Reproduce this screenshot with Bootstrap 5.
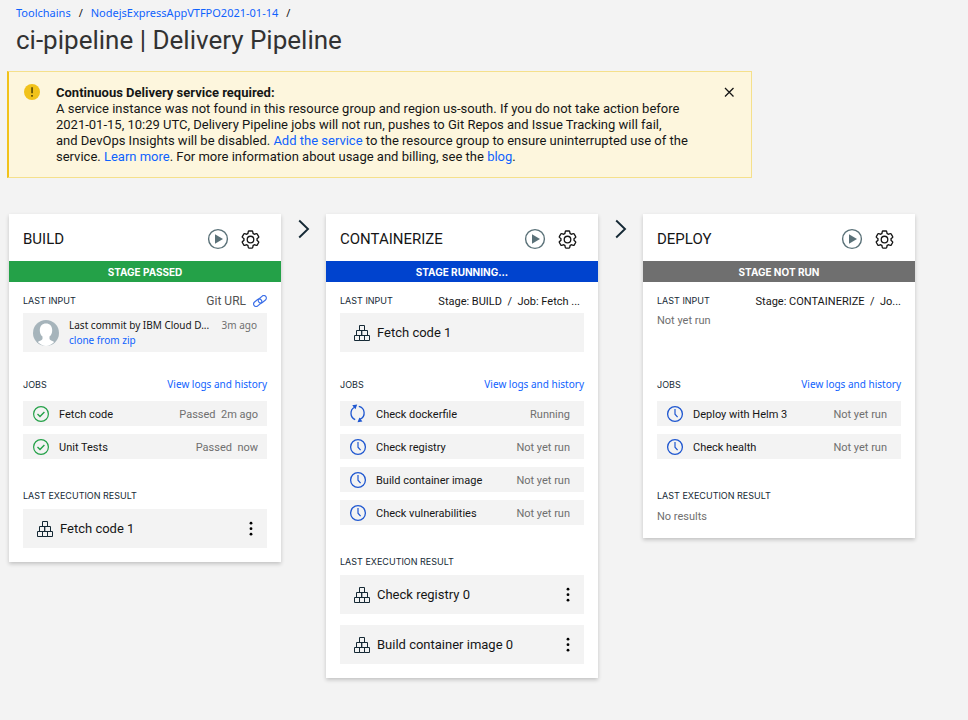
<!DOCTYPE html>
<html lang="en">
<head>
<meta charset="utf-8">
<meta name="viewport" content="width=device-width, initial-scale=1">
<title>ci-pipeline | Delivery Pipeline</title>
<link href="https://cdn.jsdelivr.net/npm/bootstrap@5.3.0/dist/css/bootstrap.min.css" rel="stylesheet">
<style>
  body { background: #f3f3f3; color: #161616; font-family: Roboto, "Liberation Sans", sans-serif; font-size: 13px; line-height: 16px; }
  a { color: #0f62fe; text-decoration: none; }
  a:hover { text-decoration: underline; }
  svg { display: block; flex: none; }
  .page-head { padding: 6px 16px 0; }
  .crumbs { font-size: 11px; line-height: 14px; font-family: "Noto Sans", sans-serif; }
  .page-title { font-size: 26px; line-height: 32px; font-weight: 400; color: #323232; }
  .page-main { padding: 15px 7px 0; }
  .notice { max-width: 745px; background: #fdf6dd; border: 1px solid #f5e08b; border-left: 2px solid #f1c21b; padding: 12px 14px 12px 15px; gap: 16px; }
  .notice-text { max-width: 640px; padding-top: 1px; }
  .icon-btn { background: none; border: 0; padding: 0; color: #161616; }
  .pipeline { padding: 36px 2px 24px; }
  .stage { flex: 0 1 272px; min-width: 0; background: #fff; box-shadow: 0 2px 4px rgba(0,0,0,.2); padding-bottom: 14px; }
  .stage-arrow { flex: 0 0 45px; padding: 5px 0 0 1px; color: #152935; }
  .stage-head { height: 47px; padding: 3px 20px 0 14px; }
  .stage-name { font-size: 15px; line-height: 18px; font-weight: 400; }
  .stage-state { height: 21px; color: #fff; font-size: 10px; font-weight: 700; font-family: Inter, sans-serif; }
  .state-passed { background: #24a148; }
  .state-running { background: #0043ce; }
  .state-idle { background: #6f6f6f; }
  .stage-body { padding: 7px 14px 0; }
  .section-label { font-size: 9px; line-height: 12px; font-weight: 400; font-family: Inter, sans-serif; color: #152935; }
  .input-head { height: 24px; }
  .input-area { height: 39px; }
  .git-url { font-size: 12px; gap: 7px; color: #525252; }
  .jobs-head { height: 33px; margin-top: 16px; }
  .result-head { height: 26px; margin-top: 24px; }
  .note { font-size: 11px; line-height: 15px; }
  .wide-note { font-size: 10px; line-height: 15px; font-family: "Noto Sans", sans-serif; }
  .soft { color: #6f6f6f; }
  .job { height: 25px; background: #f3f3f3; padding: 1px 9px 0; gap: 9px; }
  .job-later { padding-right: 14px; }
  .tile { height: 39px; background: #f3f3f3; padding: 1px 14px 0; gap: 7px; }
  .commit { height: 39px; background: #f3f3f3; padding: 0 10px; gap: 10px; }
  .stack-8 { gap: 8px; }
  .stack-11 { gap: 11px; }
  .head-icons { gap: 11px; }
</style>
</head>
<body>
<svg class="d-none" aria-hidden="true">
  <symbol id="i-play" viewBox="0 0 22 22"><circle cx="11" cy="11" r="9.4" fill="none" stroke="#5a7178" stroke-width="1.4"/><path d="M8 6.3v9.4l8-4.7z" fill="#5a7178"/></symbol>
  <symbol id="i-gear" viewBox="0 0 32 32"><path fill="currentColor" d="M27 16.76v-1.53l1.92-1.68A2 2 0 0 0 29.3 11l-2.36-4a2 2 0 0 0-1.73-1 2 2 0 0 0-.64.1l-2.43.82a11.35 11.35 0 0 0-1.31-.75l-.51-2.52a2 2 0 0 0-2-1.61h-4.68a2 2 0 0 0-2 1.61l-.51 2.52a11.48 11.48 0 0 0-1.32.75L7.43 6.06A2 2 0 0 0 6.79 6a2 2 0 0 0-1.73 1L2.7 11a2 2 0 0 0 .41 2.51L5 15.24v1.53l-1.89 1.68A2 2 0 0 0 2.7 21l2.36 4a2 2 0 0 0 1.73 1 2 2 0 0 0 .64-.1l2.43-.82a11.35 11.35 0 0 0 1.31.75l.51 2.52a2 2 0 0 0 2 1.61h4.72a2 2 0 0 0 2-1.61l.51-2.52a11.48 11.48 0 0 0 1.32-.75l2.42.82a2 2 0 0 0 .64.1 2 2 0 0 0 1.73-1l2.28-4a2 2 0 0 0-.41-2.51zM25.21 24l-3.43-1.16a8.86 8.86 0 0 1-2.71 1.57L18.36 28h-4.72l-.71-3.55a9.36 9.36 0 0 1-2.7-1.57L6.79 24l-2.36-4 2.72-2.4a8.9 8.9 0 0 1 0-3.13L4.43 12l2.36-4 3.43 1.16a8.86 8.86 0 0 1 2.71-1.57L13.64 4h4.72l.71 3.55a9.36 9.36 0 0 1 2.7 1.57L25.21 8l2.36 4-2.72 2.4a8.9 8.9 0 0 1 0 3.13L27.57 20z"/><circle cx="16" cy="16" r="5" fill="none" stroke="currentColor" stroke-width="2"/></symbol>
  <symbol id="i-chevron" viewBox="0 0 12 20"><path d="M1.2 1.5 10 10l-8.8 8.5" fill="none" stroke="currentColor" stroke-width="1.9"/></symbol>
  <symbol id="i-check" viewBox="0 0 18 18"><circle cx="9" cy="9" r="7.4" fill="none" stroke="#24a148" stroke-width="1.2"/><path d="m5.5 9.1 2.5 2.4 4.4-4.4" fill="none" stroke="#24a148" stroke-width="1.4"/></symbol>
  <symbol id="i-clock" viewBox="0 0 18 18"><circle cx="9" cy="9" r="7.4" fill="none" stroke="#1f57d0" stroke-width="1.3"/><path d="M9 4v5.2l2.6 3" fill="none" stroke="#1f57d0" stroke-width="1.2"/></symbol>
  <symbol id="i-sync" viewBox="0 0 18 20"><g fill="none" stroke="#1f57d0" stroke-width="1.3"><path d="M6.2 15.600A6.800 6.800 0 0 1 5.600 3.300"/><path d="M9.800 2.400A6.800 6.800 0 0 1 11.200 15.200"/></g><path d="M3.200 1.200 8.200.400 6.500 5.200zM13.400 17.600 8.500 18.200l1.900-4.800z" fill="#1f57d0"/></symbol>
  <symbol id="i-boxes" viewBox="0 0 16 16"><path d="M5.5.5h5v5h-5zM2.5 5.5h5.2v5H2.5zM7.7 5.5h5.8v5H7.7zM.5 10.5h5v5h-5zM5.5 10.5h5v5h-5zM10.5 10.5h5v5h-5z" fill="none" stroke="#152935" stroke-width="1"/></symbol>
  <symbol id="i-dots" viewBox="0 0 4 16"><circle cx="2" cy="2.2" r="1.4"/><circle cx="2" cy="7.7" r="1.4"/><circle cx="2" cy="13.2" r="1.4"/></symbol>
</svg>

<header class="page-head">
  <nav aria-label="Breadcrumb" class="crumbs d-flex gap-2 mb-1">
    <a href="#">Toolchains</a><span>/</span><a href="#">NodejsExpressAppVTFPO2021-01-14</a><span>/</span>
  </nav>
  <h1 class="page-title m-0">ci-pipeline | Delivery Pipeline</h1>
</header>

<main class="page-main">
  <section class="notice d-flex align-items-start" role="alert">
    <svg width="16" height="16" viewBox="0 0 16 16"><circle cx="8" cy="8" r="8" fill="#f1c21b"/><path d="M7.4 3.2h1.3v6H7.4z" fill="#332b00"/><circle cx="8" cy="11.8" r=".9" fill="#332b00"/></svg>
    <div class="notice-text flex-grow-1">
      <strong>Continuous Delivery service required:</strong><br>
      A service instance was not found in this resource group and region us-south. If you do not take action before 2021-01-15, 10:29 UTC, Delivery Pipeline jobs will not run, pushes to Git Repos and Issue Tracking will fail, and&nbsp;DevOps Insights will be disabled. <a href="#">Add the service</a> to the resource group to ensure uninterrupted use of the service. <a href="#">Learn more</a>. For more information about usage and billing, see the <a href="#">blog</a>.
    </div>
    <button type="button" class="icon-btn ms-auto" aria-label="Close"><svg width="16" height="16" viewBox="0 0 16 16"><path d="m4 4 8.5 8.5M12.500 4 4 12.500" stroke="currentColor" stroke-width="1.3"/></svg></button>
  </section>

  <div class="pipeline d-flex align-items-start">
    <section class="stage">
      <div class="stage-head d-flex align-items-center justify-content-between">
        <h2 class="stage-name m-0">BUILD</h2>
        <div class="d-flex head-icons">
          <button type="button" class="icon-btn" aria-label="Run stage"><svg width="22" height="22"><use href="#i-play"/></svg></button>
          <button type="button" class="icon-btn" aria-label="Configure stage"><svg width="21" height="21"><use href="#i-gear"/></svg></button>
        </div>
      </div>
      <div class="stage-state state-passed d-flex align-items-center justify-content-center">STAGE PASSED</div>
      <div class="stage-body">
        <div class="input-head d-flex align-items-center justify-content-between">
          <h3 class="section-label m-0">LAST INPUT</h3>
          <span class="git-url d-flex align-items-center">Git URL
            <a href="#" aria-label="Open Git URL"><svg width="14" height="12" viewBox="0 0 14 12" fill="none" stroke="#3d70e8" stroke-width="1.2"><rect x="4.800" y="1.800" width="9" height="5" rx="2.500" transform="rotate(-40 9.300 4.300)"/><rect x=".2" y="5.200" width="9" height="5" rx="2.500" transform="rotate(-40 4.700 7.700)"/></svg></a></span>
        </div>
        <div class="commit d-flex align-items-center">
          <svg width="26" height="26" viewBox="0 0 26 26"><circle cx="13" cy="13" r="13" fill="#a6b4bb"/><path d="M13 3.500c3.800 0 6.200 2.700 6.200 6.700 0 2.600-1 5-2.700 6.400v2c0 1.200 1 1.800 4.700 3.300A13 13 0 0 1 13 26a13 13 0 0 1-8.200-4.100c3.700-1.500 4.700-2.100 4.700-3.300v-2c-1.700-1.400-2.700-3.800-2.700-6.400 0-4 2.400-6.700 6.200-6.700z" fill="#fff"/></svg>
          <div class="wide-note flex-grow-1">
            <div class="d-flex"><span class="text-nowrap">Last commit by IBM Cloud D...</span><span class="soft text-nowrap ms-auto">3m ago</span></div>
            <a href="#" class="d-block">clone from zip</a>
          </div>
        </div>
        <div class="jobs-head d-flex align-items-center justify-content-between">
          <h3 class="section-label m-0">JOBS</h3><a href="#" class="wide-note">View logs and history</a>
        </div>
        <div class="d-flex flex-column stack-8 note">
          <div class="job d-flex align-items-center"><svg width="18" height="18"><use href="#i-check"/></svg><span>Fetch code</span><span class="soft ms-auto">Passed&nbsp; 2m ago</span></div>
          <div class="job d-flex align-items-center"><svg width="18" height="18"><use href="#i-check"/></svg><span>Unit Tests</span><span class="soft ms-auto">Passed&nbsp; now</span></div>
        </div>
        <div class="result-head d-flex align-items-center"><h3 class="section-label m-0">LAST EXECUTION RESULT</h3></div>
        <div class="tile d-flex align-items-center"><svg width="16" height="16"><use href="#i-boxes"/></svg><span>Fetch code 1</span><button type="button" class="icon-btn ms-auto" aria-label="More options"><svg width="4" height="16"><use href="#i-dots"/></svg></button></div>
      </div>
    </section>

    <div class="stage-arrow d-flex justify-content-center"><svg width="12" height="20"><use href="#i-chevron"/></svg></div>

    <section class="stage">
      <div class="stage-head d-flex align-items-center justify-content-between">
        <h2 class="stage-name m-0">CONTAINERIZE</h2>
        <div class="d-flex head-icons">
          <button type="button" class="icon-btn" aria-label="Run stage"><svg width="22" height="22"><use href="#i-play"/></svg></button>
          <button type="button" class="icon-btn" aria-label="Configure stage"><svg width="21" height="21"><use href="#i-gear"/></svg></button>
        </div>
      </div>
      <div class="stage-state state-running d-flex align-items-center justify-content-center">STAGE RUNNING...</div>
      <div class="stage-body">
        <div class="input-head d-flex align-items-center justify-content-between">
          <h3 class="section-label m-0 text-nowrap">LAST INPUT</h3>
          <span class="note text-nowrap pe-1">Stage: BUILD &nbsp;/&nbsp; Job: Fetch ...</span>
        </div>
        <div class="tile d-flex align-items-center"><svg width="16" height="16"><use href="#i-boxes"/></svg><span>Fetch code 1</span></div>
        <div class="jobs-head d-flex align-items-center justify-content-between">
          <h3 class="section-label m-0">JOBS</h3><a href="#" class="wide-note">View logs and history</a>
        </div>
        <div class="d-flex flex-column stack-8 note">
          <div class="job job-later d-flex align-items-center"><svg width="18" height="20"><use href="#i-sync"/></svg><span>Check dockerfile</span><span class="soft ms-auto">Running</span></div>
          <div class="job job-later d-flex align-items-center"><svg width="18" height="18"><use href="#i-clock"/></svg><span>Check registry</span><span class="soft ms-auto">Not yet run</span></div>
          <div class="job job-later d-flex align-items-center"><svg width="18" height="18"><use href="#i-clock"/></svg><span>Build container image</span><span class="soft ms-auto">Not yet run</span></div>
          <div class="job job-later d-flex align-items-center"><svg width="18" height="18"><use href="#i-clock"/></svg><span>Check vulnerabilities</span><span class="soft ms-auto">Not yet run</span></div>
        </div>
        <div class="result-head d-flex align-items-center"><h3 class="section-label m-0">LAST EXECUTION RESULT</h3></div>
        <div class="d-flex flex-column stack-11">
          <div class="tile d-flex align-items-center"><svg width="16" height="16"><use href="#i-boxes"/></svg><span>Check registry 0</span><button type="button" class="icon-btn ms-auto" aria-label="More options"><svg width="4" height="16"><use href="#i-dots"/></svg></button></div>
          <div class="tile d-flex align-items-center"><svg width="16" height="16"><use href="#i-boxes"/></svg><span>Build container image 0</span><button type="button" class="icon-btn ms-auto" aria-label="More options"><svg width="4" height="16"><use href="#i-dots"/></svg></button></div>
        </div>
      </div>
    </section>

    <div class="stage-arrow d-flex justify-content-center"><svg width="12" height="20"><use href="#i-chevron"/></svg></div>

    <section class="stage">
      <div class="stage-head d-flex align-items-center justify-content-between">
        <h2 class="stage-name m-0">DEPLOY</h2>
        <div class="d-flex head-icons">
          <button type="button" class="icon-btn" aria-label="Run stage"><svg width="22" height="22"><use href="#i-play"/></svg></button>
          <button type="button" class="icon-btn" aria-label="Configure stage"><svg width="21" height="21"><use href="#i-gear"/></svg></button>
        </div>
      </div>
      <div class="stage-state state-idle d-flex align-items-center justify-content-center">STAGE NOT RUN</div>
      <div class="stage-body">
        <div class="input-head d-flex align-items-center justify-content-between">
          <h3 class="section-label m-0 text-nowrap">LAST INPUT</h3>
          <span class="note text-nowrap">Stage: CONTAINERIZE &nbsp;/&nbsp; Jo...</span>
        </div>
        <div class="input-area note soft">Not yet run</div>
        <div class="jobs-head d-flex align-items-center justify-content-between">
          <h3 class="section-label m-0">JOBS</h3><a href="#" class="wide-note">View logs and history</a>
        </div>
        <div class="d-flex flex-column stack-8 note">
          <div class="job job-later d-flex align-items-center"><svg width="18" height="18"><use href="#i-clock"/></svg><span>Deploy with Helm 3</span><span class="soft ms-auto">Not yet run</span></div>
          <div class="job job-later d-flex align-items-center"><svg width="18" height="18"><use href="#i-clock"/></svg><span>Check health</span><span class="soft ms-auto">Not yet run</span></div>
        </div>
        <div class="result-head d-flex align-items-center"><h3 class="section-label m-0">LAST EXECUTION RESULT</h3></div>
        <div class="note soft">No results</div>
      </div>
    </section>
  </div>
</main>
<script src="https://cdn.jsdelivr.net/npm/bootstrap@5.3.0/dist/js/bootstrap.bundle.min.js"></script>
</body>
</html>
